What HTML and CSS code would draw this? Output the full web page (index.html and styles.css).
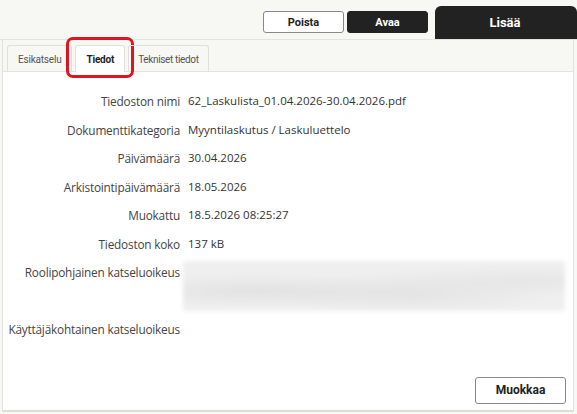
FILE: index.html
```html
<!DOCTYPE html>
<html>
<head>
    <title>Tiedot</title>
    <link rel="stylesheet" href="styles.css">
</head>
<body>
    <div class="topbar">
        <button class="btn btn-light">Poista</button>
        <button class="btn btn-dark">Avaa</button>
        <div class="add-tab">Lisää</div>
    </div>

    <div class="panel">
        <div class="tabs">
            <div class="tab">Esikatselu</div>
            <div class="tab active">Tiedot
                <span class="highlight"></span>
            </div>
            <div class="tab">Tekniset tiedot</div>
        </div>

        <div class="content">
            <div class="row">
                <div class="label">Tiedoston nimi</div>
                <div class="value">62_Laskulista_01.04.2026-30.04.2026.pdf</div>
            </div>
            <div class="row">
                <div class="label">Dokumenttikategoria</div>
                <div class="value">Myyntilaskutus / Laskuluettelo</div>
            </div>
            <div class="row">
                <div class="label">Päivämäärä</div>
                <div class="value">30.04.2026</div>
            </div>
            <div class="row">
                <div class="label">Arkistointipäivämäärä</div>
                <div class="value">18.05.2026</div>
            </div>
            <div class="row">
                <div class="label">Muokattu</div>
                <div class="value">18.5.2026 08:25:27</div>
            </div>
            <div class="row">
                <div class="label">Tiedoston koko</div>
                <div class="value">137 kB</div>
            </div>
            <div class="row row-tall">
                <div class="label">Roolipohjainen katseluoikeus</div>
                <div class="blurred"></div>
            </div>
            <div class="row">
                <div class="label">Käyttäjäkohtainen katseluoikeus</div>
                <div class="value"></div>
            </div>

            <div class="footer">
                <button class="btn btn-edit">Muokkaa</button>
            </div>
        </div>
    </div>
</body>
</html>
```

FILE: styles.css
```css
body {
    margin: 0;
    background-color: #f7f7f3;
    font-family: Roboto, "Liberation Sans", sans-serif;
    color: #333;
}

.topbar {
    height: 40px;
    display: flex;
    justify-content: flex-end;
    align-items: flex-end;
    border-bottom: 1px solid #e4e4de;
    box-sizing: border-box;
}

.btn {
    font-family: Roboto, "Liberation Sans", sans-serif;
    font-size: 11px;
    font-weight: bold;
    height: 22px;
    width: 81px;
    border-radius: 3px;
    cursor: pointer;
}

.btn-light {
    background-color: #fff;
    border: 1px solid #888;
    color: #222;
    margin-bottom: 6px;
    margin-right: 3px;
}

.btn-dark {
    background-color: #222;
    border: 1px solid #222;
    color: #fff;
    margin-bottom: 6px;
    margin-right: 7px;
}

.add-tab {
    width: 142px;
    height: 33px;
    background-color: #222;
    color: #fff;
    font-size: 13px;
    font-weight: bold;
    border-radius: 6px 6px 0 0;
    display: flex;
    align-items: center;
    justify-content: center;
    box-sizing: border-box;
    padding-right: 2px;
}

.panel {
    margin-left: 2px;
    margin-right: 3px;
    border-left: 1px solid #e2e2dc;
    border-right: 1px solid #e2e2dc;
    border-bottom: 2px solid #dcdcd6;
    background-color: #fff;
}

.tabs {
    height: 32px;
    display: flex;
    align-items: flex-end;
    padding-left: 4px;
    gap: 3px;
    background-color: #f7f7f3;
    border-bottom: 1px solid #e4e4de;
    box-sizing: border-box;
}

.tab {
    position: relative;
    height: 27px;
    padding: 0 10px;
    font-size: 10px;
    letter-spacing: -0.2px;
    color: #555;
    border: 1px solid #e0e0da;
    border-bottom: none;
    border-radius: 3px 3px 0 0;
    display: flex;
    align-items: center;
    box-sizing: border-box;
    margin-bottom: -1px;
}

.tab.active {
    background-color: #fff;
    font-weight: bold;
    color: #222;
    padding: 0 10px;
}

.tab:last-child {
    padding: 0 9px;
    letter-spacing: -0.35px;
}

.highlight {
    position: absolute;
    left: -10px;
    top: -9px;
    right: -10px;
    bottom: -6px;
    border: 3px solid #e0141e;
    border-radius: 7px;
}

.content {
    padding-top: 21px;
    padding-right: 8px;
}

.row {
    display: flex;
    align-items: flex-start;
    min-height: 28.5px;
}

.label {
    width: 177px;
    flex-shrink: 0;
    text-align: right;
    white-space: nowrap;
    font-family: "Open Sans", Roboto, sans-serif;
    font-size: 11.8px;
    letter-spacing: -0.2px;
    color: #444;
    line-height: 16px;
}

.value {
    padding-left: 8px;
    font-family: "Open Sans", Lato, sans-serif;
    font-size: 11.5px;
    color: #333;
    line-height: 16px;
}

.row-tall {
    min-height: 57px;
}

.blurred {
    margin-left: 3px;
    margin-top: -3px;
    flex: 1;
    height: 50px;
    background:
        radial-gradient(ellipse at 20% 60%, #e2e2e2 0%, transparent 40%),
        radial-gradient(ellipse at 60% 65%, #e4e4e4 0%, transparent 45%),
        radial-gradient(ellipse at 90% 40%, #e6e6e6 0%, transparent 35%),
        #efefef;
    filter: blur(2px);
}

.footer {
    display: flex;
    justify-content: flex-end;
    padding-top: 27px;
    padding-bottom: 6px;
}

.btn-edit {
    width: 91px;
    height: 27px;
    background-color: #fff;
    border: 1px solid #888;
    color: #222;
    font-size: 12px;
    margin-right: -1px;
}
```
